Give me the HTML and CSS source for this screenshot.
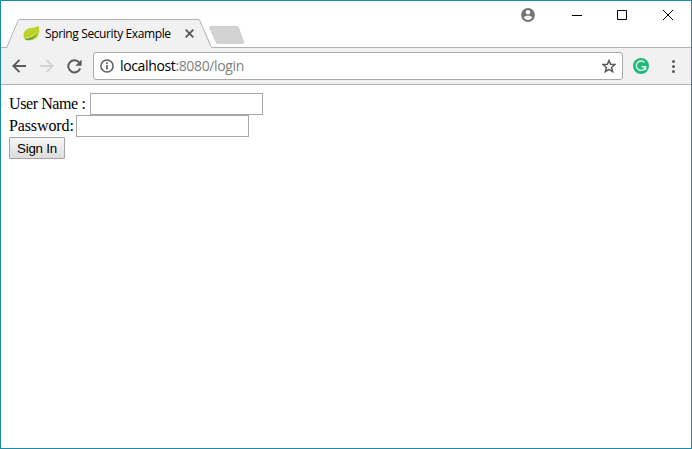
FILE: index.html
```html
<!DOCTYPE html>
<html lang="en">
<head>
<meta charset="utf-8">
<title>Spring Security Example</title>
<link rel="stylesheet" href="styles.css">
</head>
<body>
<div class="window">
  <header class="titlebar">
    <div class="tab">
      <svg class="tab-shape" width="208" height="29" viewBox="0 0 208 29"><path d="M0 28.5H1.5L13.5.5H193.500L206.500 28.500H208V29H0z" fill="#f1f1f1"/><path d="M0 28.5H.2Q.8 28.500 1.200 27.500L12 1.800Q12.500.5 13.500.5H192Q193.200.5 193.800 1.800L205 27.500Q205.500 28.500 206.500 28.500H208" fill="none" stroke="#b1b1b1"/></svg>
      <svg class="leaf" width="17" height="17" viewBox="0 0 17 17"><path d="M15.300.5C13.800 2.500 11 2.600 7.500 2.900C3.500 3.200.5 6.200.6 10.500C.7 12.500 1.500 14 3 14.700C7.500 16.200 13.500 15.100 15.600 9.500C16.700 6.500 16.300 3 15.300.5z" fill="#bdd128"/><path d="M1.500 13.300C6 13.600 11 12 14.500 7.500C12.500 13 8 16 3 14.900C2 14.500 1.400 14 1.500 13.300z" fill="#62a237"/><path d="M1.500 13.300C6 13.400 10 11.500 13.700 8" stroke="#eef2c2" stroke-width=".6" fill="none"/></svg>
      <span class="tab-title">Spring Security Example</span>
      <svg class="tab-close" width="9" height="9" viewBox="0 0 9 9"><path d="M.7.7L8.300 8.300M8.300.7L.7 8.300" stroke="#5a5a5a" stroke-width="1.900"/></svg>
    </div>
    <svg class="new-tab" width="36" height="18" viewBox="0 0 36 18"><path d="M2.300.5H27.500Q28.800.5 29.300 1.700L34.500 15.500Q35.200 17.300 33.500 17.300H9Q7.500 17.300 7 16L1 2.500Q.3.5 2.300.5z" fill="#d3d3d3" stroke="#c5c5c5" stroke-width=".8"/></svg>
    <div class="controls">
      <svg class="profile" width="14" height="14" viewBox="0 0 14 14"><circle cx="7" cy="7" r="6.900" fill="#757575"/><circle cx="7" cy="4.300" r="2.200" fill="#fff"/><path d="M2.700 9.400C3.700 7.300 10.300 7.300 11.300 9.400C10.300 11 8.700 11.900 7 11.900S3.700 11 2.700 9.400z" fill="#fff"/></svg>
      <svg class="minimize" width="10" height="10" viewBox="0 0 10 10"><path d="M0 5.500H10" stroke="#000"/></svg>
      <svg class="maximize" width="10" height="10" viewBox="0 0 10 10"><path d="M.5.5H9.500V9.500H.5z" fill="none" stroke="#000"/></svg>
      <svg width="10" height="10" viewBox="0 0 10 10"><path d="M0 0L10 10M10 0L0 10" stroke="#000"/></svg>
    </div>
  </header>
  <nav class="toolbar">
    <svg class="back" width="14" height="14" viewBox="0 0 14 14"><path d="M14 7H1.500M7.500.9L1.400 7L7.500 13.100" fill="none" stroke="#5a5a5a" stroke-width="2"/></svg>
    <svg class="forward" width="14" height="14" viewBox="0 0 14 14"><path d="M0 7H12.500M6.500.9L12.600 7L6.500 13.100" fill="none" stroke="#d3d3d3" stroke-width="2"/></svg>
    <svg class="reload" width="15" height="15" viewBox="0 0 15 15"><path d="M12.200 3.500A6.100 6.100 0 1 0 13.200 9.300" fill="none" stroke="#5a5a5a" stroke-width="2"/><path d="M14.600.6V6.800H8.400z" fill="#5a5a5a"/></svg>
    <div class="address">
      <svg width="14" height="14" viewBox="0 0 14 14"><circle cx="7" cy="7" r="6.100" fill="none" stroke="#5a5a5a" stroke-width="1.500"/><path d="M7 6V10.500M7 3.300V4.900" stroke="#5a5a5a" stroke-width="1.600"/></svg>
      <span class="url">localhost<span class="path">:8080/login</span></span>
      <svg class="star" width="14" height="14" viewBox="0 0 14 14"><path d="M7 1.400L8.600 5.200L12.900 5.500L9.600 8.400L10.700 12.700L7 10.400L3.300 12.700L4.400 8.400L1.100 5.500L5.400 5.200z" fill="none" stroke="#5a5a5a" stroke-width="1.500"/></svg>
    </div>
    <svg class="extension" width="16" height="16" viewBox="0 0 16 16"><circle cx="8" cy="8" r="8" fill="#20b978"/><path d="M11.500 4.500A4.700 4.700 0 1 0 12.500 9.200M8.500 8.700H12.600V12" fill="none" stroke="#e2faef" stroke-width="1.400"/></svg>
    <svg width="3" height="13" viewBox="0 0 3 13"><g fill="#5a5a5a"><circle cx="1.500" cy="1.500" r="1.500"/><circle cx="1.500" cy="6.500" r="1.500"/><circle cx="1.500" cy="11.500" r="1.500"/></g></svg>
  </nav>
  <main class="page">
    <form>
      <div class="row"><label class="user-label" for="user">User Name :</label><input id="user" type="text"></div>
      <div class="row"><label class="password-label" for="password">Password:</label><input id="password" type="password"></div>
      <button type="button">Sign In</button>
    </form>
  </main>
</div>
</body>
</html>
```
FILE: styles.css
```css
* { box-sizing: border-box; }
body { margin: 0; }
svg { display: block; flex: none; }
.window {
  width: 692px;
  height: 449px;
  border: 1px solid #1a8ca8;
  background: #fff;
  display: flex;
  flex-direction: column;
}
.titlebar {
  height: 47px;
  flex: none;
  display: flex;
  align-items: flex-start;
  border-bottom: 1px solid #b1b1b1;
}
.tab {
  position: relative;
  width: 208px;
  height: 29px;
  margin: 18px 0 0 5px;
  padding-left: 17px;
  display: flex;
  align-items: center;
}
.tab-shape { position: absolute; left: 0; top: 0; }
.leaf, .tab-title, .tab-close { position: relative; }
.tab-title {
  width: 126px;
  margin-left: 5px;
  font: 12px/16px "Open Sans", sans-serif;
  letter-spacing: -0.38px;
  white-space: nowrap;
  color: #000;
}
.tab-close { margin-left: 14px; }
.new-tab { margin: 25px 0 0 -5px; }
.controls {
  margin: 7px 18px 0 auto;
  display: flex;
  align-items: center;
}
.minimize { margin-left: 37px; }
.maximize { margin: 0 36px 0 35px; }
.toolbar {
  height: 37px;
  flex: none;
  display: flex;
  align-items: center;
  padding: 0 16px 0 11px;
  background: #f1f1f1;
  border-bottom: 1px solid #b1b1b1;
}
.forward { margin-left: 14px; }
.reload { margin-left: 13px; }
.address {
  width: 530px;
  height: 28px;
  margin-left: 11px;
  padding: 0 6px;
  display: flex;
  align-items: center;
  background: #fff;
  border: 1px solid #a9a9a9;
  border-radius: 3px;
}
.url {
  margin-left: 6px;
  font: 14px/20px "Open Sans", sans-serif;
  letter-spacing: -0.36px;
  color: #000;
}
.path { color: #808080; }
.star { margin-left: auto; }
.extension { margin: 0 auto 0 10px; }
.page {
  padding: 8px;
  font: 16px/22px "Liberation Serif", serif;
  color: #000;
}
.row { display: flex; height: 22px; }
.user-label { width: 81px; letter-spacing: -0.4px; white-space: nowrap; }
.password-label { width: 67px; letter-spacing: -0.12px; }
input {
  width: 173px;
  height: 22px;
  padding: 1px 2px;
  border: 1px solid #a9a9a9;
  background: #fff;
}
button {
  display: block;
  width: 56px;
  height: 22px;
  padding: 1px 0 0;
  border: 1px solid #a3a3a3;
  border-radius: 1px;
  background: linear-gradient(#f6f6f6, #dddddd);
  font: 13.333px/19px "Liberation Sans", sans-serif;
  letter-spacing: -0.2px;
  color: #000;
}
```
